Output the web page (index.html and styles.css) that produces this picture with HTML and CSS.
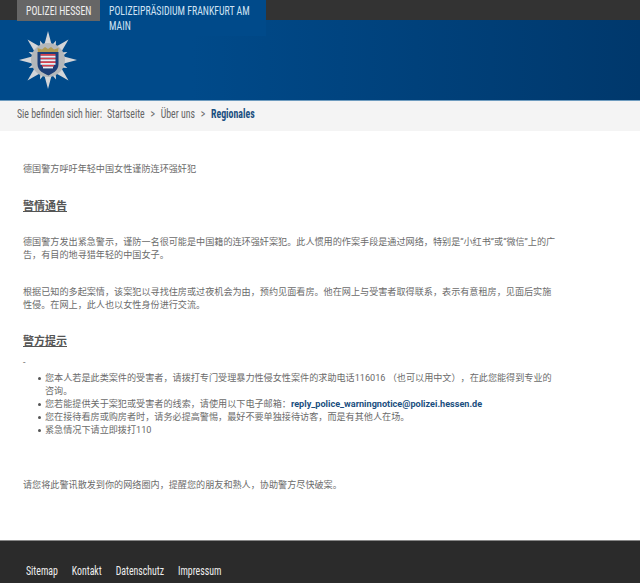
FILE: index.html
```html
<!DOCTYPE html>
<html lang="zh">
<head>
<meta charset="utf-8">
<title>Polizei Hessen</title>
<link rel="stylesheet" href="styles.css">
</head>
<body>
<header class="masthead">
  <div class="topbar">
    <a class="tab tab-home"><span class="narrow">POLIZEI HESSEN</span></a>
    <a class="tab tab-current"><span class="narrow tab-wrap">POLIZEIPRÄSIDIUM FRANKFURT AM MAIN</span></a>
  </div>
  <svg class="logo" viewBox="-30 -30 60 60" width="60" height="60" aria-label="Polizeistern">
    <defs>
      <polygon id="ray" points="-4.5,-12 0,-29 4.500,-12"/>
      <polygon id="thin" points="-3,-12 0,-21 3,-12"/>
    </defs>
    <g fill="#d3d5d8">
      <use href="#ray"/><use href="#ray" transform="rotate(90)"/><use href="#ray" transform="rotate(180)"/><use href="#ray" transform="rotate(270)"/>
      <use href="#ray" transform="rotate(45)"/><use href="#ray" transform="rotate(135)"/><use href="#ray" transform="rotate(225)"/><use href="#ray" transform="rotate(315)"/>
      <use href="#thin" transform="rotate(22.5)"/><use href="#thin" transform="rotate(67.5)"/><use href="#thin" transform="rotate(112.5)"/><use href="#thin" transform="rotate(157.5)"/>
      <use href="#thin" transform="rotate(202.5)"/><use href="#thin" transform="rotate(247.5)"/><use href="#thin" transform="rotate(292.5)"/><use href="#thin" transform="rotate(337.5)"/>
      <circle r="17" fill="#b4b7ba"/>
    </g>
    <path d="M-10,-8 L-10.500,-12 -6,-10.500 -3,-13 0,-11 3,-13 6,-10.500 10.500,-12 10,-8Z" fill="#b09a52"/>
    <path d="M-10.500,-8 H10.500 V4 C10.500,11 4,13.500 0.500,15.500 C-4,13.500 -10.500,11 -10.500,4Z" fill="#1d3f78"/>
    <g fill="#d8404c">
      <rect x="-7.500" y="-6" width="15" height="1.800"/>
      <rect x="-7.500" y="-2.400" width="15" height="1.800"/>
      <rect x="-7.500" y="1.200" width="15" height="1.800"/>
      <rect x="-6" y="4.800" width="12" height="1.800"/>
    </g>
    <g fill="#eceef2">
      <rect x="-7.500" y="-4.200" width="15" height="1.800"/>
      <rect x="-7.500" y="-0.600" width="15" height="1.800"/>
      <rect x="-7.500" y="3" width="15" height="1.800"/>
      <rect x="-5" y="6.600" width="10" height="1.800"/>
    </g>
  </svg>
</header>
<nav class="crumbs">
  <div class="crumbs-inner narrow">
    <span class="crumb-label">Sie befinden sich hier:</span>
    <a class="crumb">Startseite</a><span class="sep">&gt;</span>
    <a class="crumb">Über uns</a><span class="sep">&gt;</span>
    <a class="crumb crumb-current">Regionales</a>
  </div>
</nav>
<main class="content">
  <p class="lead">德国警方呼吁年轻中国女性谨防连环强奸犯</p>
  <h2 class="section-title first">警情通告</h2>
  <p class="para">德国警方发出紧急警示，谨防一名很可能是中国籍的连环强奸案犯。此人惯用的作案手段是通过网络，特别是“小红书”或“微信”上的广告，有目的地寻猎年轻的中国女子。</p>
  <p class="para">根据已知的多起案情，该案犯以寻找住房或过夜机会为由，预约见面看房。他在网上与受害者取得联系，表示有意租房，见面后实施性侵。在网上，此人也以女性身份进行交流。</p>
  <h2 class="section-title">警方提示</h2>
  <p class="dash">-</p>
  <ul class="tips">
    <li>您本人若是此类案件的受害者，请拨打专门受理暴力性侵女性案件的求助电话116016 （也可以用中文），在此您能得到专业的咨询。</li>
    <li>您若能提供关于案犯或受害者的线索，请使用以下电子邮箱：<a class="mail">reply_police_warningnotice@polizei.hessen.de</a></li>
    <li>您在接待看房或购房者时，请务必提高警惕，最好不要单独接待访客，而是有其他人在场。</li>
    <li>紧急情况下请立即拨打110</li>
  </ul>
  <p class="closing">请您将此警讯散发到你的网络圈内，提醒您的朋友和熟人，协助警方尽快破案。</p>
</main>
<footer class="footer">
  <div class="footer-links narrow">
    <a>Sitemap</a><a>Kontakt</a><a>Datenschutz</a><a>Impressum</a>
  </div>
</footer>
</body>
</html>
```

FILE: styles.css
```css
* { box-sizing: border-box; }
html, body { margin: 0; padding: 0; }
body {
  width: 640px;
  height: 583px;
  overflow: hidden;
  background: #fff;
  color: #6b6b6b;
  font-family: Roboto, "Noto Sans CJK SC", sans-serif;
  text-spacing-trim: space-all;
}
.narrow {
  display: inline-block;
  font-family: "Roboto Condensed", "Liberation Sans Narrow", Roboto, sans-serif;
  transform: scaleX(0.82);
  transform-origin: left top;
}
.masthead {
  height: 101px;
  background: linear-gradient(90deg, #004a8a 0%, #004a8a 30%, #00386c 100%);
  border-bottom: 1px solid #6f9cbf;
}
.topbar {
  display: flex;
  align-items: flex-start;
  height: 20px;
  padding-left: 17px;
  background: #333;
}
.tab {
  font-size: 12px;
  line-height: 14.500px;
}
.tab-home {
  height: 21px;
  width: 83px;
  padding: 4px 0 0 9px;
  background: #666;
  color: #eee;
  white-space: nowrap;
}
.tab-current {
  width: 166px;
  height: 36px;
  padding: 4px 0 0 9px;
  background: #004a8a;
  color: #cfe2f3;
}
.tab-wrap { width: 178px; }
.logo { display: block; margin: 10px 0 0 18px; }
.crumbs {
  height: 30px;
  padding: 6px 0 0 17px;
  background: #f4f4f4;
  font-size: 12px;
  line-height: 15px;
  color: #666;
}
.crumbs-inner { display: flex; white-space: nowrap; }
.crumb-label { margin-right: 6px; }
.sep { margin: 0 7px; }
.crumb-current { font-weight: 700; color: #1b4f80; }
.content {
  height: 409px;
  padding: 32px 82px 0 23px;
  font-size: 9.120px;
  line-height: 13px;
}
.content p { margin: 0; }
.section-title {
  margin: 0;
  font-size: 11px;
  line-height: 16px;
  font-weight: 700;
  color: #555;
  text-decoration: underline;
}
.section-title.first { margin: 23px 0 21px; }
.para + .para { margin-top: 24px !important; }
.para + .section-title { margin-top: 22px; }
.dash { margin-top: 6px !important; }
.tips { margin: 3px 0 0; padding: 0 0 0 22px; list-style: none; }
.tips li { position: relative; }
.tips li::before {
  content: "";
  position: absolute;
  left: -7px;
  top: 5px;
  width: 3px;
  height: 3px;
  border-radius: 50%;
  background: #555;
}
.mail { font-weight: 700; color: #1b4f80; }
.closing { margin-top: 42px !important; }
.footer {
  height: 43px;
  padding: 23px 0 0 26px;
  background: #2b2b2b;
  border-top: 1px solid #888;
  color: #eee;
  font-size: 12px;
  line-height: 14px;
}
.footer-links { display: flex; gap: 17px; white-space: nowrap; }
```
